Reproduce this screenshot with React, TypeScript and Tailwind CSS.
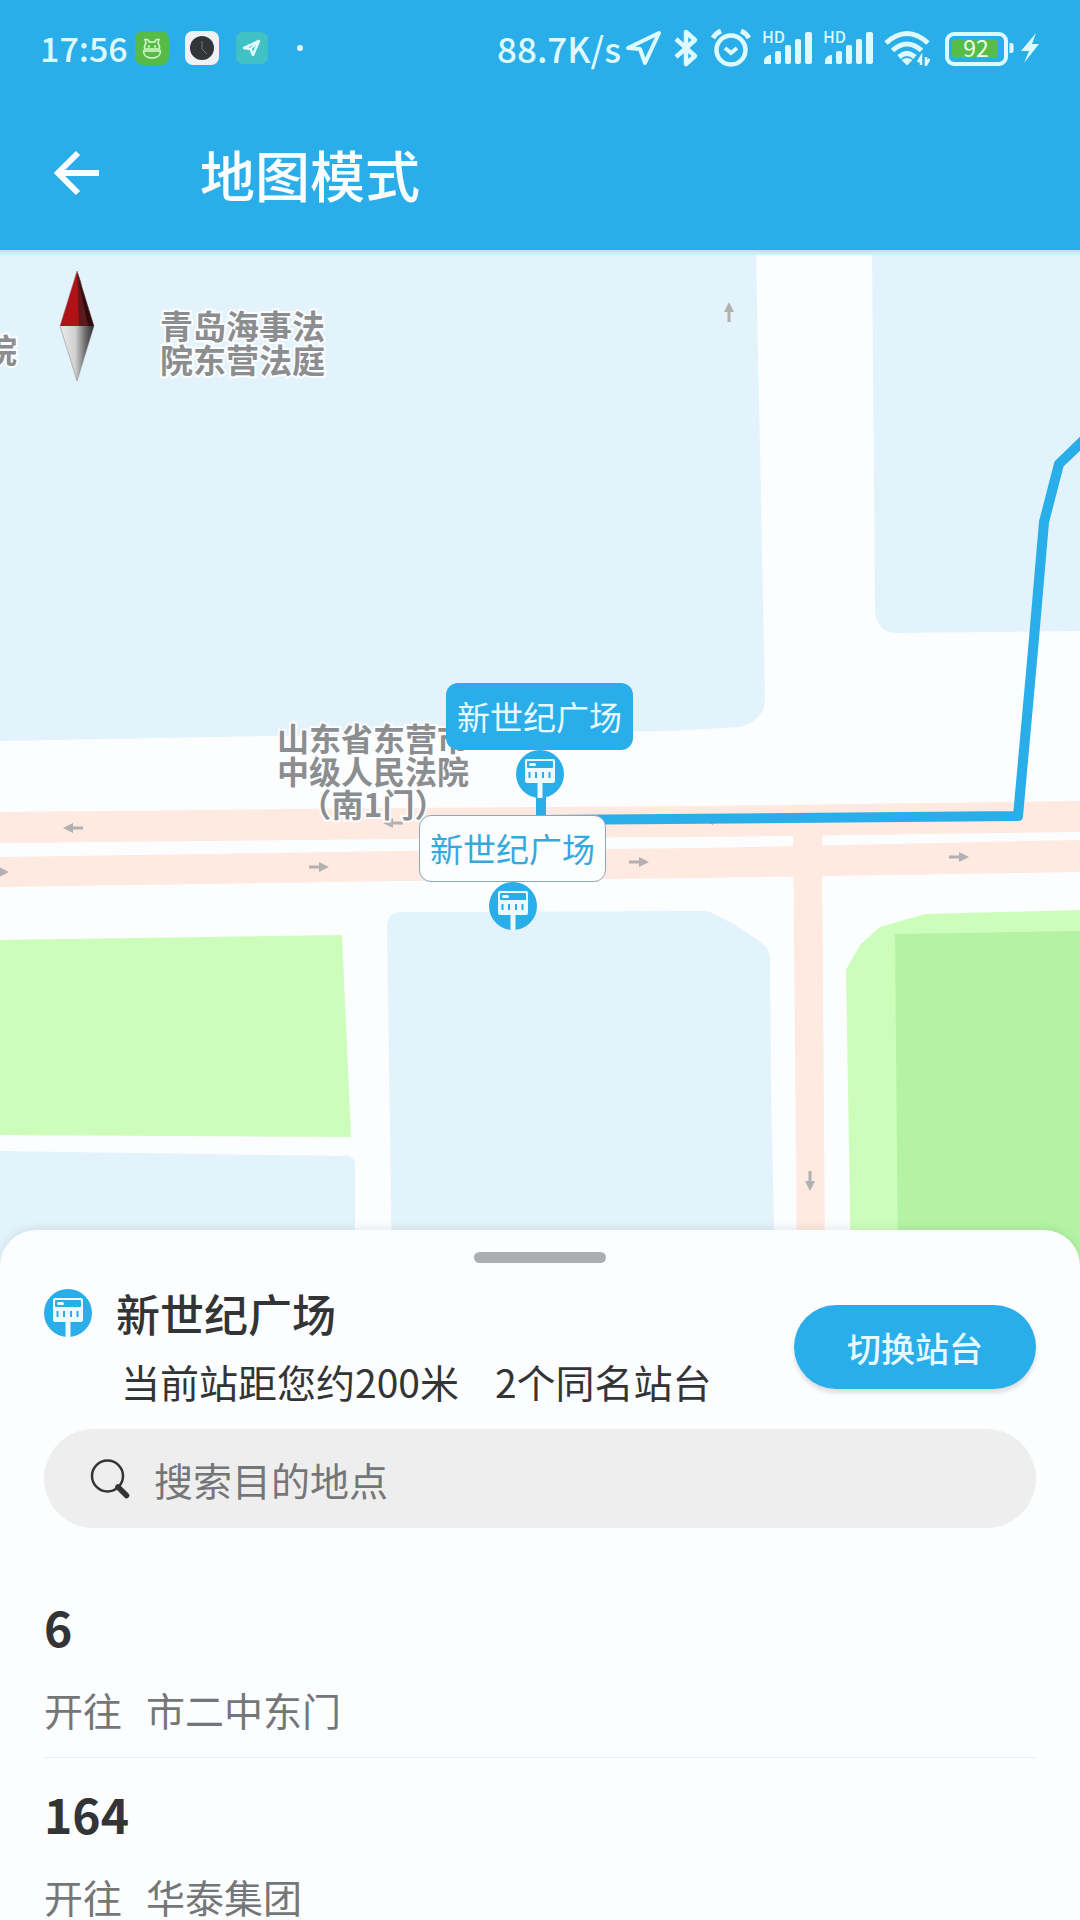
import React from "react";

const routes = [
  { number: "6", destination: "市二中东门" },
  { number: "164", destination: "华泰集团" },
];

function StationIcon() {
  return (
    <svg className="size-12 shrink-0" viewBox="-24 -24 48 48" aria-hidden="true">
      <circle r="24" fill="#29aeea" />
      <rect x="-15" y="-15" width="30" height="24" rx="2" fill="#eefaff" />
      <rect x="-13" y="-13" width="26" height="7" rx="1" fill="#29aeea" />
      <rect x="-11" y="-11" width="7" height="3" rx="1.5" fill="#eefaff" />
      <path d="M-10.5-2v6M-4-2v6M3-2v6M9.5-2v6" stroke="#29aeea" strokeWidth="2" />
      <rect x="-2.5" y="9" width="5" height="15" fill="#eefaff" />
    </svg>
  );
}

function SignalIcon() {
  return (
    <svg className="h-10 w-[50px] overflow-visible" viewBox="0 0 50 40" fill="#dffaff" aria-hidden="true">
      <text x="0" y="15" fontSize="16" fontWeight="500" fontFamily="Noto Sans CJK SC, sans-serif">
        HD
      </text>
      <path d="M2 36v-4q2-5 7-5v9z" />
      <rect x="13" y="23" width="6" height="13" rx="2" />
      <rect x="23" y="17" width="6" height="19" rx="2" />
      <rect x="33" y="11" width="6" height="25" rx="2" />
      <rect x="43" y="4" width="7" height="32" rx="2" />
    </svg>
  );
}

function StatusBar() {
  return (
    <div className="flex h-24 items-center justify-between px-10 text-[#dffaff]">
      <div className="flex items-center gap-4">
        <div className="flex items-center gap-[7px]">
          <span className="text-[34px] leading-10 font-medium">17:56</span>
          <svg className="size-[34px]" viewBox="0 0 34 34" aria-hidden="true">
            <rect width="34" height="34" rx="8" fill="#57bb48" />
            <g fill="none" stroke="#d8ffd0" strokeWidth="1.5">
              <path d="M11 12 10 8.500h2.500L14.500 11h5L21.500 8.500H24L23 12c2 3 1.500 6 1.500 6h-15S9 15 11 12zM8.500 20h17c0 4-3 7-8.500 7s-8.500-3-8.500-7z" />
              <path d="M13 15.500h2M19 15.500h2" strokeWidth="2" />
            </g>
          </svg>
        </div>
        <svg className="size-[34px]" viewBox="0 0 34 34" aria-hidden="true">
          <rect width="34" height="34" rx="8" fill="#f0f1f4" />
          <circle cx="17" cy="17" r="12" fill="#333436" />
          <path d="M17 10v8l5 5" fill="none" stroke="#77787a" />
        </svg>
        <svg className="size-[34px]" viewBox="0 0 34 34" aria-hidden="true">
          <rect x="1" y="1" width="32" height="32" rx="7" fill="#3fc1c6" />
          <path d="m24 10-6 14-2.500-6L9 17z" fill="none" stroke="#e4fbff" strokeWidth="2.500" strokeLinejoin="round" />
          <path d="m24 10-8.500 8" stroke="#e4fbff" strokeWidth="2" />
        </svg>
        <span className="ml-3 size-[6px] rounded-full bg-[#e4fbff]" />
      </div>
      <div className="flex items-center gap-[14px]">
        <div className="flex items-center gap-[11px]">
          <div className="flex items-center gap-1">
            <span className="text-[35px] leading-10 font-medium">88.7K/s</span>
            <svg className="h-10 w-[38px]" viewBox="0 0 38 40" aria-hidden="true">
              <path d="M34 5 20 35l-5-14L3 20z" fill="none" stroke="#dffaff" strokeWidth="4" strokeLinejoin="round" />
            </svg>
          </div>
          <svg className="h-10 w-[26px]" viewBox="0 0 26 40" aria-hidden="true">
            <path d="m2 11 19 17-9 8V4l9 8L2 29" fill="none" stroke="#dffaff" strokeWidth="4.500" strokeLinejoin="round" />
          </svg>
          <svg className="size-10" viewBox="0 0 40 40" fill="none" stroke="#dffaff" aria-hidden="true">
            <circle cx="20" cy="22" r="14.500" strokeWidth="4.500" />
            <path d="M2 10q3-5 8-7M38 10q-3-5-8-7" strokeWidth="5" />
            <path d="m14 20 6 5 6-5" strokeWidth="4" />
          </svg>
          <SignalIcon />
          <SignalIcon />
          <svg className="h-9 w-[46px]" viewBox="0 0 46 36" fill="none" stroke="#dffaff" strokeWidth="5" aria-hidden="true">
            <path d="M2 13q21-19 42 0M8.500 20.500q14.500-13 29 0M15 27q8-7 16 0" />
            <path d="m17.500 30 5.500 5.500 5.500-5.500q-5.500-4-11 0z" fill="#dffaff" stroke="none" />
            <path d="M37 35v-8l-3 5M42 27v8l3.500-6" strokeWidth="2.500" />
          </svg>
        </div>
        <div className="flex items-center gap-[6px]">
          <svg className="h-9 w-[70px]" viewBox="0 0 70 36" aria-hidden="true">
            <rect x="3" y="4" width="59" height="30" rx="7" fill="none" stroke="#dffaff" strokeWidth="4" />
            <rect x="8" y="9" width="46" height="19" rx="3" fill="#55bd48" />
            <path d="M65.500 13h2q2 0 2 2v6q0 2-2 2h-2z" fill="#dffaff" />
            <text x="32" y="27" textAnchor="middle" fontSize="23" fontWeight="400" fontFamily="Noto Sans CJK SC, sans-serif" fill="#efffe8">
              92
            </text>
          </svg>
          <svg className="h-[30px] w-5" viewBox="0 0 20 30" aria-hidden="true">
            <path d="M16 0 1 18h8L4 30l15-19h-7z" fill="#dffaff" />
          </svg>
        </div>
      </div>
    </div>
  );
}

function RoadArrow({ x, y, angle }: { x: number; y: number; angle: number }) {
  return (
    <path
      d="M-10-1.500H0V-5L10 0 0 5V1.500H-10z"
      fill="#b1b1b1"
      transform={`translate(${x} ${y}) rotate(${angle})`}
    />
  );
}

function MapDrawing() {
  return (
    <svg
      className="absolute inset-0 size-full"
      viewBox="0 250 1080 1020"
      preserveAspectRatio="xMidYMin slice"
      aria-hidden="true"
    >
      <rect y="250" width="1080" height="1020" fill="#fcfdff" />
      <g fill="#e2f3fc">
        <rect y="250" width="1080" height="5" />
        <path d="M0 250H756L759 400 761 500 765 700Q764 720 740 727L673 731 270 736 0 741z" />
        <path d="M872 250H1080V631L893 633Q877 630 875 612z" />
        <path d="M0 1151 350 1156 355 1161V1270H0z" />
        <path d="M387 925Q388 913 400 912L708 911 735 925 762 943Q769 948 770 957L771 1090 775 1270H392z" />
      </g>
      <g fill="#cdfdba">
        <path d="M0 940 342 935 351 1137 0 1135z" />
        <path d="M846 970 860 945 880 927 925 914 1080 910V1270H851z" />
      </g>
      <path d="M895 934 1080 931V1270H898z" fill="#b4f3a4" />
      <g fill="#feeae0">
        <path d="M0 812 400 808 700 806 1080 801V832L700 837 400 839 0 843z" />
        <path d="M0 857 400 851 700 848 1080 840V872L700 878 400 881 0 887z" />
        <path d="M793 830H822L825 1270H797z" />
      </g>
      <RoadArrow x={73} y={828} angle={180} />
      <RoadArrow x={393} y={823} angle={180} />
      <RoadArrow x={713} y={820} angle={180} />
      <RoadArrow x={-1} y={872} angle={0} />
      <RoadArrow x={319} y={867} angle={0} />
      <RoadArrow x={639} y={862} angle={0} />
      <RoadArrow x={959} y={857} angle={0} />
      <RoadArrow x={810} y={1181} angle={90} />
      <RoadArrow x={729} y={312} angle={-90} />
      <path
        d="M541 795V820L1018 816 1033 650 1044 522 1059 464 1090 434"
        fill="none"
        stroke="#29aeea"
        strokeWidth="10"
        strokeLinejoin="round"
      />
    </svg>
  );
}

function Compass() {
  return (
    <svg className="absolute top-[20px] left-[59px] h-28 w-9" viewBox="0 0 36 112" role="img" aria-label="指南针">
      <defs>
        <linearGradient id="needle">
          <stop offset="0" stopColor="#ececec" />
          <stop offset="0.45" stopColor="#d0d0d0" />
          <stop offset="0.75" stopColor="#6a6a6a" />
          <stop offset="1" stopColor="#2c2c2c" />
        </linearGradient>
      </defs>
      <path d="M18 1 1 56h34z" fill="#b01216" />
      <path d="M18 1 20 56h9L22 12z" fill="#5c1a1e" />
      <path d="M18 1 29 56h6z" fill="#30090c" />
      <path d="M1 56h34L18 111z" fill="url(#needle)" />
      <path d="M18 1 1 56 18 111 35 56z" fill="none" stroke="#8a7d7d" strokeOpacity="0.5" />
    </svg>
  );
}

const placeLabel =
  "absolute font-bold whitespace-nowrap text-center text-[#8c8d8f] [-webkit-text-stroke:4px_#fcfdff] [paint-order:stroke_fill]";

function MapView() {
  return (
    <section className="relative min-h-0 flex-1 overflow-hidden" aria-label="地图">
      <MapDrawing />
      <div className="absolute inset-x-0 top-0 h-[6px] bg-linear-to-b from-[#c4dce8] to-transparent" />
      <Compass />
      <p className={`${placeLabel} top-[82px] left-[-16px] text-[33px] leading-[34px]`}>院</p>
      <p className={`${placeLabel} top-[58px] left-[160px] text-[33px] leading-[34px]`}>
        青岛海事法
        <br />
        院东营法庭
      </p>
      <p className={`${placeLabel} top-[471px] left-[277px] text-[32px] leading-[33px]`}>
        山东省东营市
        <br />
        中级人民法院
        <br />
        （南1门）
      </p>
      <div className="absolute top-[433px] left-[446px] flex flex-col items-center">
        <button className="rounded-xl bg-[#29aeea] px-[11px] text-[33px] leading-[67px] text-[#e6faff]">新世纪广场</button>
        <StationIcon />
      </div>
      <div className="absolute top-[565px] left-[419px] flex flex-col items-center">
        <button className="rounded-xl border border-[#8fa6b5] bg-[#fcfdff] px-[10px] text-[33px] leading-[65px] text-[#36a9dc]">
          新世纪广场
        </button>
        <StationIcon />
      </div>
    </section>
  );
}

function StopSheet() {
  return (
    <section className="relative -mt-10 h-[690px] shrink-0 overflow-hidden rounded-t-[36px] bg-[#fcfdff] px-11 pt-[22px] shadow-[0_-2px_8px_rgba(0,0,0,0.08)]">
      <div className="mx-auto h-[11px] w-[132px] rounded-full bg-[#adaeb0]" />
      <div className="mt-6 flex items-center justify-between">
        <div className="flex flex-col gap-4 whitespace-nowrap text-[#333436]">
          <div className="flex items-center gap-6">
            <StationIcon />
            <h2 className="text-[44px] leading-[52px] font-medium">新世纪广场</h2>
          </div>
          <p className="flex gap-9 pl-[77px] text-[39px] leading-[52px]">
            <span>当前站距您约200米</span>
            <span>2个同名站台</span>
          </p>
        </div>
        <button className="h-[84px] w-[242px] rounded-full bg-[#29aeea] text-[34px] font-medium text-[#e6faff] shadow-[0_4px_4px_rgba(0,0,0,0.12)]">
          切换站台
        </button>
      </div>
      <label className="mt-[22px] flex h-[99px] items-center gap-6 rounded-full bg-[#eeeeee] pl-[46px]">
        <svg className="size-10 shrink-0" viewBox="0 0 40 40" fill="none" stroke="#333436" aria-hidden="true">
          <circle cx="17.500" cy="17" r="15.500" strokeWidth="2.500" />
          <path d="m28 28 8.500 8.500" strokeWidth="5.500" strokeLinecap="round" />
        </svg>
        <input
          type="text"
          aria-label="搜索目的地点"
          placeholder="搜索目的地点"
          className="min-w-0 flex-1 bg-transparent text-[39px] leading-[52px] text-[#333436] outline-none placeholder:text-[#757678]"
        />
      </label>
      <ul className="mt-[43px]">
        {routes.map((route) => (
          <li key={route.number} className="flex flex-col gap-7 border-b border-[#ececee] pt-[25px] pb-[23px]">
            <h3 className="text-[48px] leading-[60px] font-bold text-[#333436]">{route.number}</h3>
            <p className="flex gap-6 text-[39px] leading-[50px] text-[#757678]">
              <span>开往</span>
              <span>{route.destination}</span>
            </p>
          </li>
        ))}
      </ul>
    </section>
  );
}

export default function App() {
  return (
    <main className="flex h-screen flex-col overflow-hidden bg-[#fcfdff] font-['Noto_Sans_CJK_SC',sans-serif]">
      <header className="h-[250px] shrink-0 bg-[#29aeea]">
        <StatusBar />
        <div className="flex h-[154px] items-center gap-[100px] pl-[54px]">
          <button aria-label="返回">
            <svg className="h-12 w-[46px]" viewBox="0 0 46 48" fill="none" stroke="#fcfdff" strokeWidth="6" aria-hidden="true">
              <path d="M24 4 4 24l20 20M4 24h41" />
            </svg>
          </button>
          <h1 className="text-[55px] leading-[72px] font-medium text-[#fcfdff]">地图模式</h1>
        </div>
      </header>
      <MapView />
      <StopSheet />
    </main>
  );
}
